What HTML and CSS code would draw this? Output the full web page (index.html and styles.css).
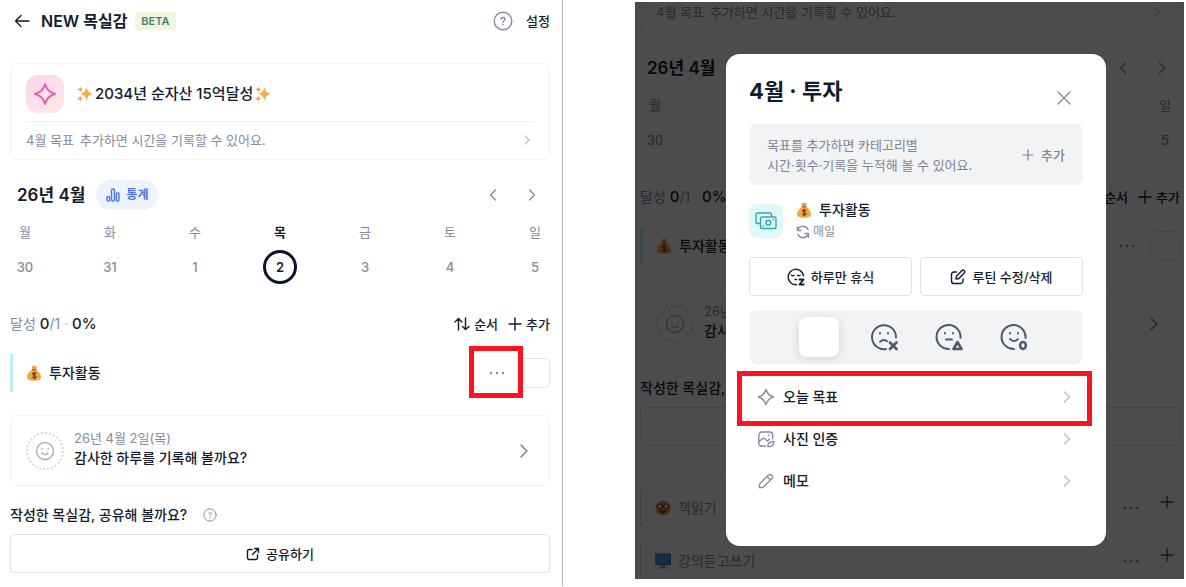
FILE: index.html
```html
<!DOCTYPE html>
<html lang="ko">
<head>
<meta charset="utf-8">
<title>NEW 목실감</title>
<link rel="stylesheet" href="styles.css">
</head>
<body>
<svg class="sprite" aria-hidden="true">
  <symbol id="chev" viewBox="0 0 8 12"><path d="M1.5 1 6.5 6l-5 5"/></symbol>
  <symbol id="chev-left" viewBox="0 0 8 12"><path d="M6.500 1 1.500 6l5 5"/></symbol>
  <symbol id="plus" viewBox="0 0 14 14"><path d="M7 1v12M1 7h12"/></symbol>
  <symbol id="dots" viewBox="0 0 16 4"><g fill="currentColor" stroke="none"><circle cx="2" cy="2" r="1.2"/><circle cx="8" cy="2" r="1.2"/><circle cx="14" cy="2" r="1.2"/></g></symbol>
  <symbol id="star4" viewBox="0 0 24 24"><path d="M12 2C13.800 7.800 16.200 10.200 22 12 16.200 13.800 13.800 16.200 12 22 10.200 16.200 7.800 13.800 2 12 7.800 10.200 10.200 7.800 12 2Z"/></symbol>
  <symbol id="help" viewBox="0 0 20 20"><circle cx="10" cy="10" r="8.800"/><path d="M8 8.300c0-2.500 4-2.500 4 0 0 1.500-2 1.400-2 3"/><path d="M10 13.400v.5"/></symbol>
  <symbol id="sort" viewBox="0 0 16 14"><path d="M4.500 13V1.500M1 5l3.500-3.500L8 5M11.500 1v11.500M8.500 9.500l3 3 3.500-3"/></symbol>
  <symbol id="sparkles" viewBox="0 0 16 16"><g stroke="none"><path fill="#fbab45" d="M9.500 1c1.100 4.200 2.300 5.600 6.300 6.800-4 1.200-5.200 2.600-6.300 6.900C8.400 10.400 7.200 9 3.200 7.800 7.200 6.600 8.400 5.200 9.500 1Z"/><path fill="#f9925c" d="M3.300.5c.5 1.900 1 2.400 2.900 2.900-1.900.5-2.400 1-2.900 2.900C2.800 4.400 2.300 3.900.4 3.400 2.300 2.900 2.800 2.400 3.300.5ZM3.200 9.800c.5 2 1 2.500 2.900 3-1.900.5-2.400 1-2.900 3-.5-2-1-2.500-2.900-3 1.900-.5 2.400-1 2.900-3Z"/></g></symbol>
  <symbol id="moneybag" viewBox="0 0 16 16"><g stroke="none"><path fill="#f0953a" d="M5.500.8 7 1.600 8.500.3l1 1.400 1.500-.4-1.300 3.500h-3Z"/><path fill="#f5a742" d="M6.300 4.800h3.600c3 1.700 5.100 4.600 5.100 7.200 0 2.700-2 3.700-6.800 3.700S1 14.600 1 12c0-2.700 2.300-5.500 5.300-7.200Z"/><path fill="#a65a28" d="M5.800 4.200h4.600v1.200H5.800Z"/></g><path d="M10 8.500c-.8-1-3.400-.9-3.400.6 0 1.700 3.500 1 3.500 2.700 0 1.500-2.700 1.600-3.600.4M8.300 7v7" stroke="#7b3a16" stroke-width="1.100"/></symbol>
  <symbol id="smile" viewBox="0 0 20 20"><circle cx="10" cy="10" r="8.500"/><path d="M7 12c1.500 2 4.500 2 6 0M6.800 7.600v.6M13.200 7.600v.6"/></symbol>
</svg>

<main class="board">
  <section class="screen">
    <header class="topbar">
      <button class="plain" aria-label="뒤로"><svg class="ic back" viewBox="0 0 16 14"><path d="M15 7H1.500M7 1.500 1.500 7 7 12.500"/></svg></button>
      <h1 class="topbar-title">NEW 목실감</h1>
      <span class="beta">BETA</span>
      <button class="plain push muted" aria-label="도움말"><svg class="ic i20"><use href="#help"/></svg></button>
      <button class="plain strong settings">설정</button>
    </header>

    <article class="card goal">
      <div class="goal-head">
        <span class="goal-badge"><svg class="ic i24"><use href="#star4"/></svg></span>
        <span class="goal-name"><svg class="ic i16"><use href="#sparkles"/></svg>2034년 순자산 15억달성<svg class="ic i16"><use href="#sparkles"/></svg></span>
      </div>
      <div class="goal-foot"><span class="goal-month">4월 목표</span><span>추가하면 시간을 기록할 수 있어요.</span><svg class="ic chev sm push"><use href="#chev"/></svg></div>
    </article>

    <div class="month">
      <h2 class="month-title">26년 4월</h2>
      <button class="stats"><svg class="ic bars" viewBox="0 0 14 14"><rect x="1" y="8.500" width="2.600" height="4.500" rx="1"/><rect x="5.500" y="1" width="3" height="12" rx="1.300"/><rect x="10.400" y="5" width="2.600" height="8" rx="1"/></svg>통계</button>
      <button class="plain push muted" aria-label="이전"><svg class="ic chev"><use href="#chev-left"/></svg></button>
      <button class="plain muted next" aria-label="다음"><svg class="ic chev"><use href="#chev"/></svg></button>
    </div>
    <div class="week names"><span>월</span><span>화</span><span>수</span><span class="on">목</span><span>금</span><span>토</span><span>일</span></div>
    <div class="week days"><span>30</span><span>31</span><span>1</span><span class="today">2</span><span>3</span><span>4</span><span>5</span></div>

    <div class="summary">
      <span class="rate">달성 <b>0</b>/1 <i>·</i> <b>0%</b></span>
      <button class="plain strong push act"><svg class="ic sort"><use href="#sort"/></svg>순서</button>
      <button class="plain strong act add"><svg class="ic i14"><use href="#plus"/></svg>추가</button>
    </div>

    <div class="routine">
      <svg class="ic i16"><use href="#moneybag"/></svg><span class="routine-name">투자활동</span>
      <button class="plain push muted more marked" aria-label="더보기"><svg class="ic dots"><use href="#dots"/></svg></button>
      <input class="check" type="checkbox" aria-label="투자활동 완료">
    </div>

    <article class="card diary">
      <span class="ring"><svg class="ic i20"><use href="#smile"/></svg></span>
      <div class="diary-text"><p class="diary-date">26년 4월 2일(목)</p><p class="diary-ask">감사한 하루를 기록해 볼까요?</p></div>
      <svg class="ic chev lg push"><use href="#chev"/></svg>
    </article>

    <div class="share-title">작성한 목실감, 공유해 볼까요?<svg class="ic i14 muted"><use href="#help"/></svg></div>
    <button class="outline share"><svg class="ic i14" viewBox="0 0 14 14"><path d="M6 2.500H3A1.500 1.500 0 0 0 1.500 4v7A1.500 1.500 0 0 0 3 12.500h7a1.500 1.500 0 0 0 1.500-1.500V8M8.500 1.500h4v4M12.500 1.500 6.500 7.500"/></svg>공유하기</button>
  </section>

  <section class="screen dimmed">
    <div class="backdrop-page">
      <article class="card goal cut">
        <div class="goal-foot"><span class="goal-month">4월 목표</span><span>추가하면 시간을 기록할 수 있어요.</span><svg class="ic chev sm push"><use href="#chev"/></svg></div>
      </article>
      <div class="month">
        <h2 class="month-title">26년 4월</h2>
        <span class="push muted"><svg class="ic chev"><use href="#chev-left"/></svg></span>
        <span class="muted next"><svg class="ic chev"><use href="#chev"/></svg></span>
      </div>
      <div class="week names"><span>월</span><span>일</span></div>
      <div class="week days"><span>30</span><span>5</span></div>
      <div class="summary">
        <span class="rate">달성 <b>0</b>/1 <i>·</i> <b>0%</b></span>
        <span class="strong push act">순서</span>
        <span class="strong act add"><svg class="ic i14"><use href="#plus"/></svg>추가</span>
      </div>
      <div class="routine">
        <svg class="ic i16"><use href="#moneybag"/></svg><span class="routine-name">투자활동</span>
        <span class="push muted more"><svg class="ic dots"><use href="#dots"/></svg></span>
        <span class="check"></span>
      </div>
      <article class="card diary">
        <span class="ring"><svg class="ic i20"><use href="#smile"/></svg></span>
        <div class="diary-text"><p class="diary-date">26년</p><p class="diary-ask">감사</p></div>
        <svg class="ic chev lg push"><use href="#chev"/></svg>
      </article>
      <div class="share-title">작성한 목실감,</div>
      <div class="outline share"></div>
      <div class="later">
        <div class="routine idle">
          <svg class="ic i16" viewBox="0 0 16 16"><circle cx="8" cy="8" r="7.500" fill="#f59a35" stroke="none"/><g stroke="#5a2d1c" stroke-width="1"><circle cx="4.800" cy="6.500" r="2.500" fill="#fbe3c0"/><circle cx="11.200" cy="6.500" r="2.500" fill="#fbe3c0"/><path d="M5 11.300c1.800 2 4.200 2 6 0Z" fill="#c0392b"/></g></svg><span class="routine-name">책읽기</span>
          <span class="push muted"><svg class="ic dots"><use href="#dots"/></svg></span><svg class="ic i14 up"><use href="#plus"/></svg>
        </div>
        <div class="routine idle">
          <svg class="ic i16" viewBox="0 0 16 16"><path d="M.5 1h15v10.500H.5Z" fill="#2f9fe8" stroke="#4b6f8c" stroke-width="1"/><path d="M6 12h4v2H6ZM3 14h10v1.500H3Z" fill="#9aa7b2" stroke="none"/></svg><span class="routine-name">강의듣고쓰기</span>
          <span class="push muted"><svg class="ic dots"><use href="#dots"/></svg></span><svg class="ic i14 up"><use href="#plus"/></svg>
        </div>
      </div>
    </div>
    <div class="scrim"></div>

    <div class="modal" role="dialog" aria-labelledby="dlg">
      <header class="modal-head">
        <h2 class="modal-title" id="dlg">4월 · 투자</h2>
        <button class="plain push muted close" aria-label="닫기"><svg class="ic i14" viewBox="0 0 14 14"><path d="m1 1 12 12M13 1 1 13"/></svg></button>
      </header>
      <div class="hint">
        <p>목표를 추가하면 카테고리별<br>시간·횟수·기록을 누적해 볼 수 있어요.</p>
        <button class="plain push hint-add"><svg class="ic i12"><use href="#plus"/></svg>추가</button>
      </div>
      <div class="item">
        <span class="item-badge"><svg class="ic i24" viewBox="0 0 24 24"><path d="M6 14.500H3.500A1.500 1.500 0 0 1 2 13V5.500A1.500 1.500 0 0 1 3.500 4H16a1.500 1.500 0 0 1 1.500 1.500V7"/><rect x="6.500" y="8" width="15.500" height="11.500" rx="1.500"/><circle cx="14.300" cy="13.700" r="2.400"/><path d="M9 17h.5M19 10.500h.5"/></svg></span>
        <div>
          <p class="item-name"><svg class="ic i16"><use href="#moneybag"/></svg>투자활동</p>
          <p class="item-repeat"><svg class="ic i14" viewBox="0 0 14 14"><path d="M1.500 5.500A5.600 5.600 0 0 1 12 4.500M1.500 2v3.500H5M12.500 8.500A5.600 5.600 0 0 1 2 9.500M12.500 12V8.500H9"/></svg>매일</p>
        </div>
      </div>
      <div class="pair">
        <button class="outline"><svg class="ic i18" viewBox="0 0 18 18"><path d="M16.500 7.800A7.700 7.700 0 1 0 9.500 16.700M4.500 7.200c.8.600 1.800.6 2.600 0M10.500 7.200c.8.600 1.800.6 2.600 0M8 11.500h1.500"/><path d="M12.500 11.500h4l-4 5h4.200" stroke-width="1.800"/></svg>하루만 휴식</button>
        <button class="outline"><svg class="ic i16" viewBox="0 0 16 16"><path d="M6.500 3H4a2.500 2.500 0 0 0-2.500 2.500V12A2.500 2.500 0 0 0 4 14.500h6.500A2.500 2.500 0 0 0 13 12v-2M6 10l.5-3 5.300-5.300a1.500 1.500 0 0 1 2.400 2.400L9 9.500Z"/></svg>루틴 수정/삭제</button>
      </div>
      <div class="moods">
        <button class="mood picked" aria-label="없음"></button>
        <button class="mood" aria-label="못함"><svg class="ic i28" viewBox="0 0 28 28"><path d="M26 14.500A12 12 0 1 0 16 26M10 10v.6M18 10v.6M10 19c2-2.600 5-2.600 7-.8"/><path d="m20 19.500 6.500 6.500M26.500 19.500 20 26" stroke-width="2.600"/></svg></button>
        <button class="mood" aria-label="조금"><svg class="ic i28" viewBox="0 0 28 28"><path d="M25.500 15A12 12 0 1 0 14 26M10 10v.6M18 10v.6M11 16.500h6"/><path d="m22.500 19-4 7h8Z" stroke-width="2.600"/></svg></button>
        <button class="mood" aria-label="완료"><svg class="ic i28" viewBox="0 0 28 28"><path d="M25.500 15A12 12 0 1 0 14 26M10 10v.6M18 10v.6M10 16c2 2.600 6 2.600 8 0"/><ellipse cx="23" cy="22.500" rx="2.900" ry="3.400" stroke-width="2.500"/></svg></button>
      </div>
      <nav class="links">
        <button class="link focus"><svg class="ic i18 star"><use href="#star4"/></svg>오늘 목표<svg class="ic chev push"><use href="#chev"/></svg></button>
        <button class="link"><svg class="ic i18" viewBox="0 0 18 18"><path d="M8.500 16H5a3.200 3.200 0 0 1-3.200-3.200V5.200A3.200 3.200 0 0 1 5 2h7.500a3.200 3.200 0 0 1 3.200 3.200v3.500M2 11.500 6.500 8l4 3 2-2M11.800 5v.6"/><path d="M11 16.500c-.8-3 1.500-5 5.800-5 .5 3.500-2 5.500-5.800 5Z"/></svg>사진 인증<svg class="ic chev push"><use href="#chev"/></svg></button>
        <button class="link"><svg class="ic i18" viewBox="0 0 18 18"><path d="M2.500 15.500c-.4-2 0-3.500 1-4.500l8-8a2.500 2.500 0 0 1 3.500 3.500l-8 8c-1 1-2.500 1.400-4.500 1ZM10 4.500 13.500 8"/></svg>메모<svg class="ic chev push"><use href="#chev"/></svg></button>
      </nav>
    </div>
  </section>
</main>
</body>
</html>
```

FILE: styles.css
```css
:root {
  --ink: #141b2d;
  --muted: #858c9d;
  --line: #f2f2f3;
  --mark: #fa1420;
}

* { box-sizing: border-box; }

body {
  margin: 0;
  background: #fff;
  color: var(--ink);
  font-family: Inter, "Noto Sans CJK KR", sans-serif;
  font-size: 14px;
  line-height: 20px;
}

h1, h2, p { margin: 0; }
button { font: inherit; color: inherit; cursor: pointer; }

.sprite { position: absolute; width: 0; height: 0; }

.ic {
  display: block;
  flex: none;
  fill: none;
  stroke: currentColor;
  stroke-width: 1.4;
  stroke-linecap: round;
  stroke-linejoin: round;
}
.i12 { width: 12px; height: 12px; }
.i14 { width: 14px; height: 14px; }
.i16 { width: 16px; height: 16px; }
.i18 { width: 18px; height: 18px; }
.i20 { width: 20px; height: 20px; }
.i24 { width: 24px; height: 24px; }
.i28 { width: 28px; height: 28px; }
.chev { width: 8px; height: 12px; }
.chev.sm { height: 10px; color: #b9bdc8; }
.chev.lg { width: 10px; height: 14px; color: var(--muted); }
.dots { width: 16px; height: 4px; }
.sort { width: 16px; height: 14px; }
.back { width: 16px; height: 14px; }
.bars { width: 14px; height: 14px; }

.push { margin-left: auto; }
.muted { color: var(--muted); }
.strong { font-weight: 500; }
.plain {
  display: flex;
  align-items: center;
  padding: 0;
  border: 0;
  background: none;
}

.board {
  display: grid;
  grid-template-columns: 563fr 549fr;
  gap: 72px;
  padding-right: 2px;
}

.screen {
  padding: 0 12px 13px 10px;
  border-right: 1px solid #b8b8b8;
}

.topbar {
  display: flex;
  align-items: center;
  height: 41px;
  padding-left: 4px;
}
.topbar-title {
  margin-left: 11px;
  font-size: 16px;
  font-weight: 600;
}
.beta {
  margin-left: 8px;
  padding: 0 6px;
  border-radius: 4px;
  background: #edf8dc;
  color: #4f806c;
  font-size: 11px;
  font-weight: 600;
  line-height: 18px;
}
.settings {
  margin-left: 13px;
  font-size: 13px;
}

.card {
  border: 1px solid var(--line);
  border-radius: 7px;
}

.goal {
  margin-top: 22px;
  padding: 11px 15px 0;
}
.goal-head {
  display: flex;
  align-items: center;
  gap: 13px;
  padding-bottom: 8px;
  border-bottom: 1px solid var(--line);
}
.goal-badge {
  display: grid;
  place-items: center;
  width: 38px;
  height: 38px;
  border-radius: 12px;
  background: linear-gradient(135deg, #fcd5ec, #ffe9e6);
  color: #de63b0;
}
.goal-badge .ic { stroke-width: 2; }
.goal-name {
  display: flex;
  align-items: center;
  gap: 2px;
  font-size: 15px;
  font-weight: 500;
}
.goal-foot {
  display: flex;
  align-items: center;
  height: 37px;
  padding: 0 3px 2px 0;
  color: var(--muted);
  font-size: 13px;
}
.goal-month { margin-right: 6px; }

.month {
  display: flex;
  align-items: center;
  height: 30px;
  margin-top: 20px;
  padding: 0 14px 0 7px;
}
.month-title {
  font-size: 17px;
  font-weight: 600;
}
.stats {
  display: flex;
  align-items: center;
  gap: 6px;
  height: 30px;
  margin-left: 11px;
  padding: 0 10px;
  border: 0;
  border-radius: 15px;
  background: #edf2ff;
  color: #4a78f5;
  font-size: 12px;
  font-weight: 600;
}
.next { margin-left: 31px; }

.week {
  display: flex;
  justify-content: space-between;
  align-items: center;
  margin-top: 12px;
  color: var(--muted);
  font-size: 13px;
  text-align: center;
}
.week span { width: 30px; }
.week .on { color: var(--ink); font-weight: 600; }
.days {
  height: 34px;
  margin-top: 8px;
  font-weight: 500;
}
.days .today {
  width: 34px;
  margin: 0 -2px;
  border: 3px solid #0b132b;
  border-radius: 50%;
  color: var(--ink);
  font-weight: 600;
  line-height: 28px;
}

.summary {
  display: flex;
  align-items: center;
  height: 24px;
  margin-top: 28px;
}
.rate { color: var(--muted); }
.rate b { color: var(--ink); font-size: 15px; font-weight: 500; }
.rate i { color: #c3c7cf; font-style: normal; }
.act {
  display: flex;
  align-items: center;
  gap: 4px;
  font-size: 13px;
}
.add { margin-left: 10px; }

.routine {
  display: flex;
  align-items: center;
  height: 38px;
  margin-top: 18px;
  padding-left: 13px;
  border-left: 3px solid #bdeef7;
}
.routine-name {
  margin-left: 7px;
  font-weight: 500;
}
.more { padding: 8px 15px; }
.marked { position: relative; }
.marked::after {
  content: "";
  position: absolute;
  inset: -17px -3px -15px -5px;
  border: 5px solid var(--mark);
}
.check {
  appearance: none;
  width: 30px;
  height: 30px;
  margin: 0;
  border: 1px solid #e3e5ea;
  border-radius: 5px;
}

.diary {
  display: flex;
  align-items: center;
  gap: 10px;
  height: 71px;
  margin-top: 23px;
  padding: 0 20px 0 15px;
}
.diary-text { padding-bottom: 5px; }
.ring {
  display: grid;
  place-items: center;
  width: 38px;
  height: 38px;
  border: 2px dotted #d5d8dd;
  border-radius: 50%;
  color: #a9aeba;
}
.diary-date { color: var(--muted); font-size: 13px; }
.diary-ask { font-weight: 500; }

.share-title {
  display: flex;
  align-items: center;
  gap: 16px;
  margin: 19px 0 9px;
  font-weight: 500;
}

.outline {
  display: flex;
  justify-content: center;
  align-items: center;
  gap: 6px;
  width: 100%;
  height: 39px;
  padding: 0;
  border: 1px solid #dfe2e8;
  border-radius: 4px;
  background: #fff;
  font-size: 13px;
  font-weight: 500;
}

/* Second screen: page under a scrim with the routine dialog open */
.dimmed {
  position: relative;
  align-self: start;
  margin-top: 2px;
  padding: 0 4px 0 5px;
  border: 0;
}
.backdrop-page { overflow: hidden; }
.cut {
  margin-top: 0;
  padding-top: 0;
  border-top: 0;
  border-radius: 0 0 7px 7px;
}
.cut .goal-foot {
  align-items: flex-start;
  height: 30px;
}
.cut .chev { margin-top: 5px; }
.later {
  margin-top: 26px;
  border-top: 1px dashed #e3e5ea;
}
.idle {
  height: 37px;
  margin-top: 16px;
  border-left: 2px solid #e3e5ea;
}
.idle .routine-name { color: var(--muted); font-weight: 400; }
.idle .up { margin: 0 6px 12px 21px; color: #4d5872; }
.scrim {
  position: absolute;
  inset: 0;
  background: rgba(0, 0, 0, 0.7);
}

.modal {
  position: absolute;
  inset: 52px 78px 33px 91px;
  padding: 23px;
  border-radius: 14px;
  background: #fff;
}
.modal-head {
  display: flex;
  align-items: flex-start;
  height: 47px;
}
.modal-title {
  font-size: 22px;
  font-weight: 700;
  line-height: 28px;
}
.close { margin-top: 14px; margin-right: 12px; }

.hint {
  display: flex;
  align-items: center;
  height: 61px;
  padding: 0 18px;
  border-radius: 7px;
  background: #f1f3f5;
  color: #7c8495;
  font-size: 13px;
}
.hint-add {
  gap: 7px;
  font-weight: 500;
}

.item {
  display: flex;
  align-items: center;
  gap: 13px;
  height: 42px;
  margin-top: 15px;
}
.item-badge {
  display: grid;
  place-items: center;
  width: 34px;
  height: 34px;
  border-radius: 8px;
  background: #dff9fb;
  color: #35a5b5;
}
.item-name, .item-repeat {
  display: flex;
  align-items: center;
}
.item-name { gap: 7px; font-weight: 500; }
.item-repeat { gap: 3px; margin-top: 2px; color: var(--muted); font-size: 12px; }

.pair {
  display: grid;
  grid-template-columns: 1fr 1fr;
  gap: 8px;
  margin-top: 15px;
}

.moods {
  display: grid;
  grid-template-columns: repeat(4, 40px);
  justify-content: center;
  align-items: center;
  gap: 25px;
  height: 54px;
  margin-top: 14px;
  border-radius: 8px;
  background: #f1f3f5;
}
.mood {
  display: grid;
  place-items: center;
  height: 40px;
  padding: 0;
  border: 0;
  border-radius: 8px;
  background: none;
  color: #4d5872;
}
.mood .ic { stroke-width: 2; }
.picked {
  background: #fff;
  box-shadow: 0 2px 10px rgba(20, 27, 45, 0.14);
}

.links { margin-top: 12px; }
.link {
  display: flex;
  align-items: center;
  gap: 8px;
  position: relative;
  width: 100%;
  height: 42px;
  padding: 0 12px 0 8px;
  border: 0;
  background: none;
  font-weight: 500;
}
.link .ic { color: var(--muted); }
.link .star { stroke-width: 2; }
.link .chev { color: #b9bdc8; }
.focus::after {
  content: "";
  position: absolute;
  inset: -5px -9px -8px -12px;
  border: 5px solid var(--mark);
}
```
